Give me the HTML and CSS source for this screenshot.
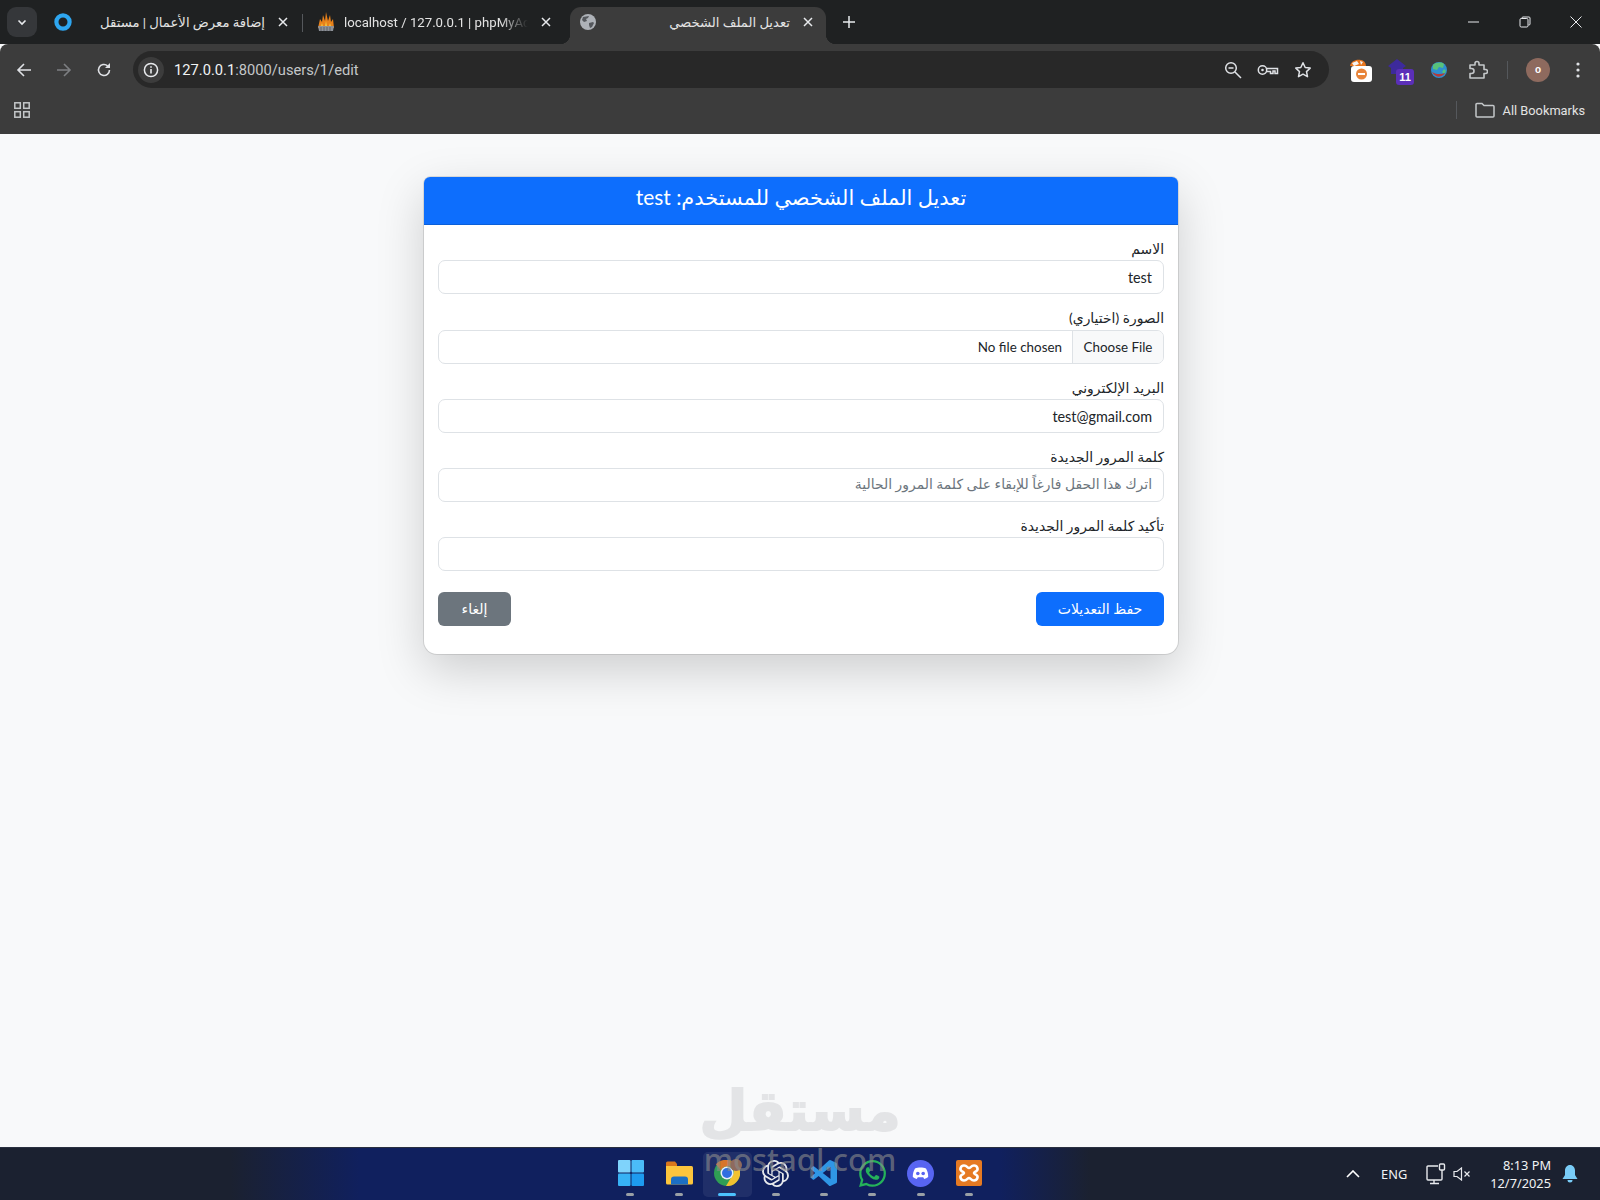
FILE: index.html
```html
<!DOCTYPE html>
<html lang="ar">
<head>
  <meta charset="UTF-8">
  <title>تعديل الملف الشخصي</title>
  <link rel="stylesheet" href="styles.css">
</head>
<body>

<div class="browser">
  <div class="tabstrip">
    <div class="tab-expand">
      <svg width="12" height="12" viewBox="0 0 12 12"><path d="M2.5 4.5 6 8l3.5-3.500" fill="none" stroke="#e8eaed" stroke-width="1.600"/></svg>
    </div>
    <div class="tab tab-one">
      <svg class="favicon" width="18" height="18" viewBox="0 0 18 18"><circle cx="9" cy="9" r="6.600" fill="none" stroke="#2ea6f0" stroke-width="4.200"/></svg>
      <span class="tab-title tab-title-ar" dir="rtl">إضافة معرض الأعمال | مستقل</span>
      <svg class="tab-close" width="10" height="10" viewBox="0 0 10 10"><path d="M1 1l8 8M9 1l-8 8" stroke="#e8eaed" stroke-width="1.500"/></svg>
    </div>
    <div class="tab-sep"></div>
    <div class="tab tab-two">
      <svg class="favicon" width="18" height="20" viewBox="0 0 18 20">
        <path d="M1 16 3 7l2 3 1-7 2 6 1-9 2 9 2-6 1 7 2-3 1 9z" fill="#e8811a"/>
        <path d="M4 15l1-4 1 4zM8 15l1-6 1 6zM12 15l1-4 1 4z" fill="#f7d64a"/>
        <path d="M1 14h16l-1 5H2z" fill="#8d9198"/>
        <path d="M4 15v4M7 15v4M10 15v4M13 15v4" stroke="#55585d" stroke-width=".8"/>
      </svg>
      <span class="tab-title tab-title-fade">localhost / 127.0.0.1 | phpMyAd</span>
      <svg class="tab-close" width="10" height="10" viewBox="0 0 10 10"><path d="M1 1l8 8M9 1l-8 8" stroke="#e8eaed" stroke-width="1.500"/></svg>
    </div>
    <div class="tab tab-active">
      <svg class="favicon" width="16" height="16" viewBox="0 0 16 16">
        <circle cx="8" cy="8" r="8" fill="#aeb2b8"/>
        <path d="M3 3c2 0 4-1 6-1l-1 2-2 1 1 2-3 1-2-2zM9 9l4-1 1 1-2 4-2 1-1-3z" fill="#55585d"/>
      </svg>
      <span class="tab-title tab-title-ar" dir="rtl">تعديل الملف الشخصي</span>
      <svg class="tab-close" width="10" height="10" viewBox="0 0 10 10"><path d="M1 1l8 8M9 1l-8 8" stroke="#e8eaed" stroke-width="1.500"/></svg>
    </div>
    <svg class="tab-plus" width="12" height="12" viewBox="0 0 12 12"><path d="M6 0v12M0 6h12" stroke="#e8eaed" stroke-width="1.500"/></svg>
    <div class="window-controls">
      <svg width="12" height="12" viewBox="0 0 12 12"><path d="M0 6h11" stroke="#e8eaed"/></svg>
      <svg width="12" height="12" viewBox="0 0 12 12"><path d="M3 2.500V2a1 1 0 0 1 1-1h6a1 1 0 0 1 1 1v6a1 1 0 0 1-1 1h-.5" fill="none" stroke="#e8eaed"/><rect x="1" y="2.500" width="8" height="8.500" rx="1.200" fill="none" stroke="#e8eaed"/></svg>
      <svg width="12" height="12" viewBox="0 0 12 12"><path d="M.5.5l11 11M11.500.5l-11 11" stroke="#e8eaed"/></svg>
    </div>
  </div>

  <div class="toolbar">
    <svg class="nav-btn" width="16" height="16" viewBox="0 0 16 16"><path d="M15 8H2M8 2 2 8l6 6" fill="none" stroke="#dfe1e5" stroke-width="1.600"/></svg>
    <svg class="nav-btn" width="16" height="16" viewBox="0 0 16 16"><path d="M1 8h13M8 2l6 6-6 6" fill="none" stroke="#7d7f82" stroke-width="1.600"/></svg>
    <svg class="nav-btn" width="16" height="16" viewBox="0 0 16 16"><path d="M13.500 8A5.500 5.500 0 1 1 11.600 3.800" fill="none" stroke="#dfe1e5" stroke-width="1.600"/><path d="M14 1v5H9z" fill="#dfe1e5"/></svg>
    <div class="omnibox">
      <div class="site-info">
        <svg width="16" height="16" viewBox="0 0 16 16"><circle cx="8" cy="8" r="6.600" fill="none" stroke="#e8eaed" stroke-width="1.500"/><path d="M8 7v4.500M8 4.200v1.600" stroke="#e8eaed" stroke-width="1.600"/></svg>
      </div>
      <div class="url"><span class="url-host">127.0.0.1</span>:8000/users/1/edit</div>
      <div class="omni-icons">
        <svg width="18" height="18" viewBox="0 0 18 18"><circle cx="7" cy="7" r="5.300" fill="none" stroke="#dfe1e5" stroke-width="1.500"/><path d="M4.500 7h5M11 11l6 6" stroke="#dfe1e5" stroke-width="1.500"/></svg>
        <svg width="22" height="14" viewBox="0 0 22 14"><circle cx="5.500" cy="7" r="4.200" fill="none" stroke="#dfe1e5" stroke-width="1.500"/><circle cx="5.500" cy="7" r="1.300" fill="#dfe1e5"/><path d="M9.700 5.500H20.500v5h-2.500V8h-2v2.500h-2.500V8.500H9.700" fill="none" stroke="#dfe1e5" stroke-width="1.500"/></svg>
        <svg width="18" height="18" viewBox="0 0 18 18"><path d="M9 1.800l2.200 4.700 5 .6-3.700 3.500 1 5.100L9 13.200l-4.500 2.500 1-5.100L1.800 7.100l5-.6z" fill="none" stroke="#dfe1e5" stroke-width="1.500" stroke-linejoin="round"/></svg>
      </div>
    </div>
    <div class="ext-icons">
      <svg class="ext" width="26" height="26" viewBox="0 0 26 26">
        <path d="M3 9c1-5 6-7 11-6 3 .5 5 3 5 6z" fill="#e8761e"/>
        <path d="M5 6l5-2 2 3-5 2zM13 4l3 1-2 3z" fill="#f4f4f4"/>
        <rect x="4" y="9" width="21" height="16" rx="3" fill="#fff"/>
        <circle cx="14.500" cy="17" r="5.500" fill="#e8843a"/>
        <rect x="11" y="16" width="7" height="2" fill="#fff"/>
      </svg>
      <div class="ext ext-cap">
        <svg width="24" height="24" viewBox="0 0 24 24"><path d="M0 9 9 2l9 7-3 2v6H3v-6z" fill="#3d2a9c"/></svg>
        <span class="ext-badge">11</span>
      </div>
      <svg class="ext" width="18" height="18" viewBox="0 0 18 18">
        <circle cx="9" cy="9" r="8" fill="#2f8fd0"/>
        <path d="M3 4c3-3 9-3 11-1l-1 4-4-1-2 3-4-1zM14 8l2 2-2 3-2-2z" fill="#58c27a"/>
        <path d="M2 11c3 2 8 3 13 1-2 4-9 6-13-1z" fill="#b33a3a"/>
      </svg>
      <svg class="ext" width="20" height="20" viewBox="0 0 20 20"><path d="M2 5h5V3.500a2 2 0 0 1 4 0V5h5v4.500h1.500a2 2 0 0 1 0 4H16V18H2v-4.500h1.500a2.500 2.500 0 0 0 0-5H2z" fill="none" stroke="#c4c7c9" stroke-width="1.600" stroke-linejoin="round"/></svg>
      <div class="toolbar-sep"></div>
      <div class="avatar">o</div>
      <svg class="ext" width="4" height="16" viewBox="0 0 4 16"><circle cx="2" cy="2" r="1.600" fill="#dfe1e5"/><circle cx="2" cy="8" r="1.600" fill="#dfe1e5"/><circle cx="2" cy="14" r="1.600" fill="#dfe1e5"/></svg>
    </div>
  </div>

  <div class="bookmarks">
    <svg width="16" height="16" viewBox="0 0 16 16"><g fill="none" stroke="#c4c7c9" stroke-width="1.500"><rect x=".8" y=".8" width="5.500" height="5.500"/><rect x="9.700" y=".8" width="5.500" height="5.500"/><rect x=".8" y="9.700" width="5.500" height="5.500"/><rect x="9.700" y="9.700" width="5.500" height="5.500"/></g></svg>
    <div class="bookmarks-right">
      <div class="toolbar-sep"></div>
      <svg width="20" height="16" viewBox="0 0 20 16"><path d="M1 2.500a1 1 0 0 1 1-1h5l2 2h9a1 1 0 0 1 1 1V14a1 1 0 0 1-1 1H2a1 1 0 0 1-1-1z" fill="none" stroke="#c4c7c9" stroke-width="1.500"/></svg>
      <span class="all-bookmarks">All Bookmarks</span>
    </div>
  </div>
</div>

<main class="page">
  <div class="card" dir="rtl">
    <div class="card-header">تعديل الملف الشخصي للمستخدم: test</div>
    <form class="card-body">
      <div class="field">
        <label>الاسم</label>
        <div class="input">test</div>
      </div>
      <div class="field">
        <label>الصورة (اختياري)</label>
        <div class="input input-file">
          <span class="file-btn">Choose File</span>
          <span class="file-name">No file chosen</span>
        </div>
      </div>
      <div class="field">
        <label>البريد الإلكتروني</label>
        <div class="input">test@gmail.com</div>
      </div>
      <div class="field">
        <label>كلمة المرور الجديدة</label>
        <div class="input input-placeholder">اترك هذا الحقل فارغاً للإبقاء على كلمة المرور الحالية</div>
      </div>
      <div class="field">
        <label>تأكيد كلمة المرور الجديدة</label>
        <div class="input"></div>
      </div>
      <div class="actions">
        <button type="button" class="btn btn-save">حفظ التعديلات</button>
        <button type="button" class="btn btn-cancel">إلغاء</button>
      </div>
    </form>
  </div>
</main>

<footer class="taskbar">
  <div class="task-icons">
    <div class="task">
      <svg width="26" height="26" viewBox="0 0 26 26"><rect x="0" y="0" width="12.500" height="12.500" rx="1" fill="#7fd3fb"/><rect x="13.500" y="0" width="12.500" height="12.500" rx="1" fill="#4bbcf8"/><rect x="0" y="13.500" width="12.500" height="12.500" rx="1" fill="#37b2f5"/><rect x="13.500" y="13.500" width="12.500" height="12.500" rx="1" fill="#1d9bf0"/></svg>
      <i class="task-dot"></i>
    </div>
    <div class="task">
      <svg width="27" height="24" viewBox="0 0 27 24"><path d="M0 2a1.500 1.500 0 0 1 1.500-1.500H9L11 3v4H0z" fill="#d9771c"/><path d="M0 5h25.500A1.500 1.500 0 0 1 27 6.500V22a1.500 1.500 0 0 1-1.500 1.500h-24A1.500 1.500 0 0 1 0 22z" fill="#fcc53d"/><path d="M5 23.500v-5a3 3 0 0 1 3-3h11a3 3 0 0 1 3 3v5z" fill="#1c6fc4"/></svg>
      <i class="task-dot"></i>
    </div>
    <div class="task task-active">
      <svg width="26" height="26" viewBox="0 0 26 26">
        <circle cx="13" cy="13" r="13" fill="#2f9e54"/>
        <path d="M13 0a13 13 0 0 1 11.300 6.500H13a6.500 6.500 0 0 0-6 4L2 4.200A13 13 0 0 1 13 0z" fill="#d8752a"/>
        <path d="M24.300 6.500A13 13 0 0 1 12 26l5.700-9.500a6.500 6.500 0 0 0-.5-10z" fill="#f2c230"/>
        <circle cx="13" cy="13" r="6.500" fill="#e8eef7"/>
        <circle cx="13" cy="13" r="5" fill="#2f6fe0"/>
      </svg>
      <span class="chrome-badge"></span>
      <i class="task-dot task-dot-active"></i>
    </div>
    <div class="task">
      <svg width="27" height="27" viewBox="0 0 24 24"><path fill="#e6e8ec" d="M22.2819 9.8211a5.9847 5.9847 0 0 0-.5157-4.9108 6.0462 6.0462 0 0 0-6.5098-2.9A6.0651 6.0651 0 0 0 4.9807 4.1818a5.9847 5.9847 0 0 0-3.9977 2.9 6.0462 6.0462 0 0 0 .7427 7.0966 5.98 5.98 0 0 0 .511 4.9107 6.051 6.051 0 0 0 6.5146 2.9001A5.9847 5.9847 0 0 0 13.2599 24a6.0557 6.0557 0 0 0 5.7718-4.2058 5.9894 5.9894 0 0 0 3.9977-2.9001 6.0557 6.0557 0 0 0-.7475-7.0729zm-9.022 12.6081a4.4755 4.4755 0 0 1-2.8764-1.0408l.1419-.0804 4.7783-2.7582a.7948.7948 0 0 0 .3927-.6813v-6.7369l2.02 1.1686a.071.071 0 0 1 .038.052v5.5826a4.504 4.504 0 0 1-4.4945 4.4944zm-9.6607-4.1254a4.4708 4.4708 0 0 1-.5346-3.0137l.142.0852 4.783 2.7582a.7712.7712 0 0 0 .7806 0l5.8428-3.3685v2.3324a.0804.0804 0 0 1-.0332.0615L9.74 19.9502a4.4992 4.4992 0 0 1-6.1408-1.6464zM2.3408 7.8956a4.485 4.485 0 0 1 2.3655-1.9728V11.6a.7664.7664 0 0 0 .3879.6765l5.8144 3.3543-2.0201 1.1685a.0757.0757 0 0 1-.071 0l-4.8303-2.7865A4.504 4.504 0 0 1 2.3408 7.872zm16.5963 3.8558L13.1038 8.364 15.1192 7.2a.0757.0757 0 0 1 .071 0l4.8303 2.7913a4.4944 4.4944 0 0 1-.6765 8.1042v-5.6772a.79.79 0 0 0-.407-.667zm2.0107-3.0231l-.142-.0852-4.7735-2.7818a.7759.7759 0 0 0-.7854 0L9.409 9.2297V6.8974a.0662.0662 0 0 1 .0284-.0615l4.8303-2.7866a4.4992 4.4992 0 0 1 6.6802 4.66zM8.3065 12.863l-2.02-1.1638a.0804.0804 0 0 1-.038-.0567V6.0742a4.4992 4.4992 0 0 1 7.3757-3.4537l-.142.0805L8.704 5.459a.7948.7948 0 0 0-.3927.6813zm1.0976-2.3654l2.602-1.4998 2.6069 1.4998v2.9994l-2.5974 1.4997-2.6067-1.4997Z"/></svg>
      <i class="task-dot"></i>
    </div>
    <div class="task">
      <svg width="26" height="26" viewBox="0 0 24 24"><path fill="#2f96e6" d="M23.150 2.587L18.210.21a1.494 1.494 0 0 0-1.705.29l-9.460 8.630-4.120-3.128a.999.999 0 0 0-1.276.057L.327 7.261A1 1 0 0 0 .326 8.740L3.899 12 .326 15.260a1 1 0 0 0 .001 1.479L1.650 17.940a.999.999 0 0 0 1.276.057l4.120-3.128 9.460 8.630a1.492 1.492 0 0 0 1.704.29l4.942-2.377A1.500 1.500 0 0 0 24 20.060V3.939a1.500 1.500 0 0 0-.850-1.352zm-5.146 14.861L10.826 12l7.178-5.448v10.896z"/></svg>
      <i class="task-dot"></i>
    </div>
    <div class="task">
      <svg width="27" height="27" viewBox="0 0 24 24"><path fill="#25b25a" d="M17.472 14.382c-.297-.149-1.758-.867-2.030-.967-.273-.099-.471-.148-.670.150-.197.297-.767.966-.940 1.164-.173.199-.347.223-.644.075-.297-.150-1.255-.463-2.390-1.475-.883-.788-1.480-1.761-1.653-2.059-.173-.297-.018-.458.130-.606.134-.133.298-.347.446-.520.149-.174.198-.298.298-.497.099-.198.050-.371-.025-.520-.075-.149-.669-1.612-.916-2.207-.242-.579-.487-.500-.669-.510-.173-.008-.371-.010-.570-.010-.198 0-.520.074-.792.372-.272.297-1.040 1.016-1.040 2.479 0 1.462 1.065 2.875 1.213 3.074.149.198 2.096 3.200 5.077 4.487.709.306 1.262.489 1.694.625.712.227 1.360.195 1.871.118.571-.085 1.758-.719 2.006-1.413.248-.694.248-1.289.173-1.413-.074-.124-.272-.198-.570-.347m-5.421 7.403h-.004a9.870 9.870 0 01-5.031-1.378l-.361-.214-3.741.982.998-3.648-.235-.374a9.860 9.860 0 01-1.510-5.260c.001-5.450 4.436-9.884 9.888-9.884 2.640 0 5.122 1.030 6.988 2.898a9.825 9.825 0 012.893 6.994c-.003 5.450-4.437 9.884-9.885 9.884m8.413-18.297A11.815 11.815 0 0012.050 0C5.495 0 .160 5.335.157 11.892c0 2.096.547 4.142 1.588 5.945L.057 24l6.305-1.654a11.882 11.882 0 005.683 1.448h.005c6.554 0 11.890-5.335 11.893-11.893a11.821 11.821 0 00-3.480-8.413z"/></svg>
      <i class="task-dot"></i>
    </div>
    <div class="task">
      <svg width="27" height="27" viewBox="0 0 27 27"><circle cx="13.500" cy="13.500" r="13.500" fill="#5865f2"/><path d="M8 8.500c3-1.300 8-1.300 11 0 1.500 2.500 2.300 5.300 2.200 8.500-1.300 1-2.600 1.600-4 1.900l-1-1.700H10.800l-1 1.700c-1.400-.3-2.700-.9-4-1.900C5.700 13.800 6.500 11 8 8.500z" fill="#fff"/><circle cx="10.800" cy="13.500" r="1.800" fill="#5865f2"/><circle cx="16.200" cy="13.500" r="1.800" fill="#5865f2"/></svg>
      <i class="task-dot"></i>
    </div>
    <div class="task">
      <svg width="26" height="26" viewBox="0 0 26 26"><rect width="26" height="26" rx="2" fill="#e67a22"/><path d="M8 5.500c3 0 3.500 2.500 5 2.500s2-2.500 5-2.500c3.500 0 4.500 4 2.500 5.500-1 .8-2.500 1-2.500 2s1.500 1.200 2.500 2c2 1.500 1 5.500-2.500 5.500-3 0-3.500-2.500-5-2.500s-2 2.500-5 2.500c-3.500 0-4.500-4-2.500-5.500 1-.8 2.500-1 2.500-2s-1.500-1.200-2.500-2c-2-1.500-1-5.500 2.500-5.500z" fill="#e67a22" stroke="#fff" stroke-width="2.600"/></svg>
      <i class="task-dot"></i>
    </div>
  </div>
  <div class="tray">
    <svg class="tray-chevron" width="14" height="8" viewBox="0 0 14 8"><path d="M1 7l6-6 6 6" fill="none" stroke="#fff" stroke-width="1.600"/></svg>
    <span class="tray-lang">ENG</span>
    <svg class="tray-net" width="20" height="22" viewBox="0 0 20 22"><path d="M12 3H2a1 1 0 0 0-1 1v12a1 1 0 0 0 1 1h13a1 1 0 0 0 1-1v-4M8 17v3M4 20.500h9" fill="none" stroke="#e8eaed" stroke-width="1.400"/><rect x="13.500" y="1" width="5" height="6" rx="1" fill="none" stroke="#e8eaed" stroke-width="1.400"/><path d="M16 7v5" stroke="#e8eaed" stroke-width="1.400"/></svg>
    <svg class="tray-vol" width="18" height="14" viewBox="0 0 18 14"><path d="M1 4.500h3L8.500 1v12L4 9.500H1z" fill="none" stroke="#e8eaed" stroke-width="1.200"/><path d="M11.500 4.500l5 5M16.500 4.500l-5 5" stroke="#e8eaed" stroke-width="1.200"/></svg>
    <div class="tray-clock">
      <span>8:13 PM</span>
      <span>12/7/2025</span>
    </div>
    <svg class="tray-bell" width="16" height="18" viewBox="0 0 16 18"><path d="M8 0c3 0 5 2.500 5 5.500V10l2.500 4H.5L3 10V5.500C3 2.500 5 0 8 0z" fill="#79ccf7"/><path d="M5.500 15h5a2.500 2.500 0 0 1-5 0z" fill="#79ccf7"/></svg>
  </div>
</footer>

<div class="watermark">
  <div class="watermark-ar">مستقل</div>
  <div class="watermark-en">mostaql.com</div>
</div>

</body>
</html>
```

FILE: styles.css
```css
* {
  box-sizing: border-box;
}
html, body {
  margin: 0;
  height: 100%;
}
body {
  width: 1600px;
  height: 1200px;
  overflow: hidden;
  display: flex;
  flex-direction: column;
  font-family: Lato, "DejaVu Sans", sans-serif;
  background: #f8f9fa;
  color: #212529;
}

/* browser chrome */
.tabstrip {
  height: 44px;
  background: #1f2122;
  display: flex;
  align-items: flex-start;
  padding-left: 7px;
  font-family: Roboto, "DejaVu Sans", sans-serif;
}
.tab-expand {
  width: 30px;
  height: 30px;
  margin-top: 7px;
  background: #35373a;
  border-radius: 9px;
  display: flex;
  align-items: center;
  justify-content: center;
}
.tab {
  height: 37px;
  margin-top: 7px;
  display: flex;
  align-items: center;
  padding: 0 13px 7px 17px;
  font-size: 13.2px;
  color: #e3e3e3;
}
.tab-one {
  width: 264px;
}
.tab-sep {
  width: 1px;
  height: 18px;
  margin: 14px 6px 0 1px;
  background: #55585c;
}
.tab-two {
  width: 255px;
  padding-left: 8px;
}
.tab-active {
  width: 256px;
  margin-left: 6px;
  background: #3c3c3c;
  border-radius: 11px 11px 0 0;
  position: relative;
  padding-left: 10px;
}
.tab-active::before,
.tab-active::after {
  content: "";
  position: absolute;
  bottom: 0;
  width: 10px;
  height: 10px;
}
.tab-active::before {
  left: -10px;
  background: radial-gradient(circle at 0 0, transparent 10px, #3c3c3c 10.5px);
}
.tab-active::after {
  right: -10px;
  background: radial-gradient(circle at 100% 0, transparent 10px, #3c3c3c 10.5px);
}
.favicon {
  flex: none;
}
.tab-title {
  flex: 1;
  min-width: 0;
  white-space: nowrap;
  margin: 0 13px 0 9px;
}
.tab-title-ar {
  text-align: right;
}
.tab-title-fade {
  -webkit-mask-image: linear-gradient(to left, transparent, #000 28px);
  mask-image: linear-gradient(to left, transparent, #000 28px);
}
.tab-close {
  flex: none;
}
.tab-plus {
  margin: 16px 0 0 17px;
}
.window-controls {
  margin-left: auto;
  display: flex;
  gap: 39px;
  padding: 16px 18px 0 0;
}

.toolbar {
  height: 44px;
  background: #3c3c3c;
  border-radius: 8px 8px 0 0;
  display: flex;
  align-items: flex-start;
  padding-left: 16px;
  font-family: Roboto, sans-serif;
}
.nav-btn {
  margin: 18px 24px 0 0;
}
.omnibox {
  width: 1196px;
  height: 37px;
  margin: 7px 0 0 -3px;
  background: #282828;
  border-radius: 19px;
  display: flex;
  align-items: center;
  padding-left: 5px;
}
.site-info {
  width: 26px;
  height: 26px;
  border-radius: 50%;
  background: #3c3c3c;
  display: flex;
  align-items: center;
  justify-content: center;
}
.url {
  margin-left: 10px;
  font-size: 14.7px;
  color: #c4c7c9;
}
.url-host {
  color: #f1f3f4;
}
.omni-icons {
  margin-left: auto;
  display: flex;
  align-items: center;
  gap: 15px;
  padding-right: 17px;
}
.ext-icons {
  flex: 1;
  height: 37px;
  margin-top: 7px;
  display: flex;
  align-items: center;
  padding-left: 18px;
}
.ext {
  flex: none;
}
.ext-cap {
  position: relative;
  width: 26px;
  height: 26px;
  margin-left: 15px;
}
.ext-badge {
  position: absolute;
  right: 0;
  bottom: -2px;
  width: 18px;
  height: 16px;
  border-radius: 3px;
  background: #5b2fb8;
  color: #fff;
  font: bold 11px/16px "Liberation Sans", sans-serif;
  text-align: center;
}
.ext-icons > svg:nth-child(3) {
  margin-left: 16px;
}
.ext-icons > svg:nth-child(4) {
  margin-left: 20px;
}
.toolbar-sep {
  width: 1px;
  height: 18px;
  background: #55585c;
}
.ext-icons .toolbar-sep {
  margin-left: 19px;
}
.avatar {
  width: 24px;
  height: 24px;
  margin-left: 18px;
  border-radius: 50%;
  background: #8e6a5e;
  color: #fff;
  font: bold 10px/24px "Liberation Sans", sans-serif;
  text-align: center;
}
.ext-icons > svg:last-child {
  margin-left: 26px;
}

.bookmarks {
  height: 46px;
  background: #3c3c3c;
  display: flex;
  align-items: center;
  padding: 0 15px 2px 14px;
  font-family: Roboto, sans-serif;
}
.bookmarks-right {
  margin-left: auto;
  display: flex;
  align-items: center;
  color: #e3e3e3;
}
.bookmarks-right svg {
  margin: 0 8px 0 18px;
}
.all-bookmarks {
  font-size: 12.8px;
}

/* page */
.page {
  flex: 1;
  padding: 43px 0 0 2px;
  display: flex;
  justify-content: center;
  align-items: flex-start;
}
.card {
  width: 754px;
  background: #fff;
  border-radius: 7px 7px 13px 13px;
  box-shadow: 0 16px 48px rgba(0, 0, 0, 0.175), 0 0 0 1px rgba(0, 0, 0, 0.1);
}
.card-header {
  height: 48px;
  padding-top: 6px;
  background: #0d6efd;
  color: #fff;
  border-radius: 6px 6px 0 0;
  border-bottom: 1px solid #0b5fd8;
  font-size: 20.9px;
  line-height: 28px;
  text-align: center;
}
.card-body {
  padding: 14px 14px 28px;
}
.field {
  margin-bottom: 14px;
}
.field label {
  display: block;
  height: 21.25px;
  font-size: 13.9px;
  line-height: 19px;
}
.input {
  height: 34px;
  border: 1px solid #dee2e6;
  border-radius: 7px;
  background: #fff;
  padding: 1px 11px 0;
  font-size: 14.4px;
  line-height: 32px;
}
.input-file {
  display: flex;
  padding: 0;
  overflow: hidden;
  font-size: 13.4px;
}
.file-btn {
  width: 91px;
  flex: none;
  text-align: center;
  background: #f8f9fa;
  border-left: 1px solid #dee2e6;
}
.file-name {
  padding: 0 10px;
}
.input-placeholder {
  color: #6c757d;
  font-size: 13.9px;
  padding-top: 0;
  line-height: 30px;
}
.actions {
  display: flex;
  justify-content: space-between;
  padding-top: 7px;
}
.btn {
  height: 34px;
  border: none;
  border-radius: 6px;
  color: #fff;
  font-family: inherit;
  font-size: 14px;
  padding-bottom: 2px;
}
.btn-save {
  width: 128px;
  background: #0d6efd;
}
.btn-cancel {
  width: 73px;
  background: #6c757d;
}

/* taskbar */
.taskbar {
  height: 53px;
  flex: none;
  position: relative;
  border-top: 1px solid #2a3040;
  background: linear-gradient(to right, #1b2130 0, #1b2130 230px, #10205e 360px, #10205e 1000px, #1b2130 1090px, #1b2130 100%);
  display: flex;
  justify-content: center;
}
.task-icons {
  display: flex;
}
.task {
  width: 48.4px;
  height: 45px;
  margin-top: 4px;
  position: relative;
  display: flex;
  align-items: center;
  justify-content: center;
  padding-bottom: 3px;
  border-radius: 5px;
}
.task-active {
  background: rgba(255, 255, 255, 0.07);
}
.task-dot {
  position: absolute;
  bottom: 1px;
  left: 20px;
  width: 8px;
  height: 3px;
  border-radius: 2px;
  background: #9aa0a6;
}
.task-dot-active {
  left: 15px;
  width: 18px;
  background: #4cc2ff;
}
.chrome-badge {
  position: absolute;
  left: 27px;
  top: 7px;
  width: 12px;
  height: 12px;
  border-radius: 50%;
  background: #8e6a5e;
}
.tray {
  position: absolute;
  right: 22px;
  top: 0;
  height: 52px;
  display: flex;
  align-items: center;
  color: #f1f3f4;
  font-family: "Noto Sans", sans-serif;
  font-size: 12.8px;
}
.tray-lang {
  margin-left: 21px;
}
.tray-net {
  margin-left: 19px;
}
.tray-vol {
  margin-left: 7px;
}
.tray-clock {
  margin-left: 19px;
  display: flex;
  flex-direction: column;
  align-items: flex-end;
  line-height: 18px;
}
.tray-bell {
  margin-left: 11px;
}

/* mostaql watermark over the shot */
.watermark {
  position: absolute;
  left: 660px;
  top: 1078px;
  width: 280px;
  text-align: center;
  pointer-events: none;
}
.watermark-ar {
  font-family: "DejaVu Sans", sans-serif;
  font-weight: bold;
  font-size: 55px;
  line-height: 66px;
  color: #e3e4e6;
  -webkit-text-stroke: 2px #e3e4e6;
}
.watermark-en {
  font-family: "Noto Sans", sans-serif;
  font-weight: 500;
  font-size: 31px;
  line-height: 30px;
  color: rgba(140, 140, 140, 0.62);
}
```
